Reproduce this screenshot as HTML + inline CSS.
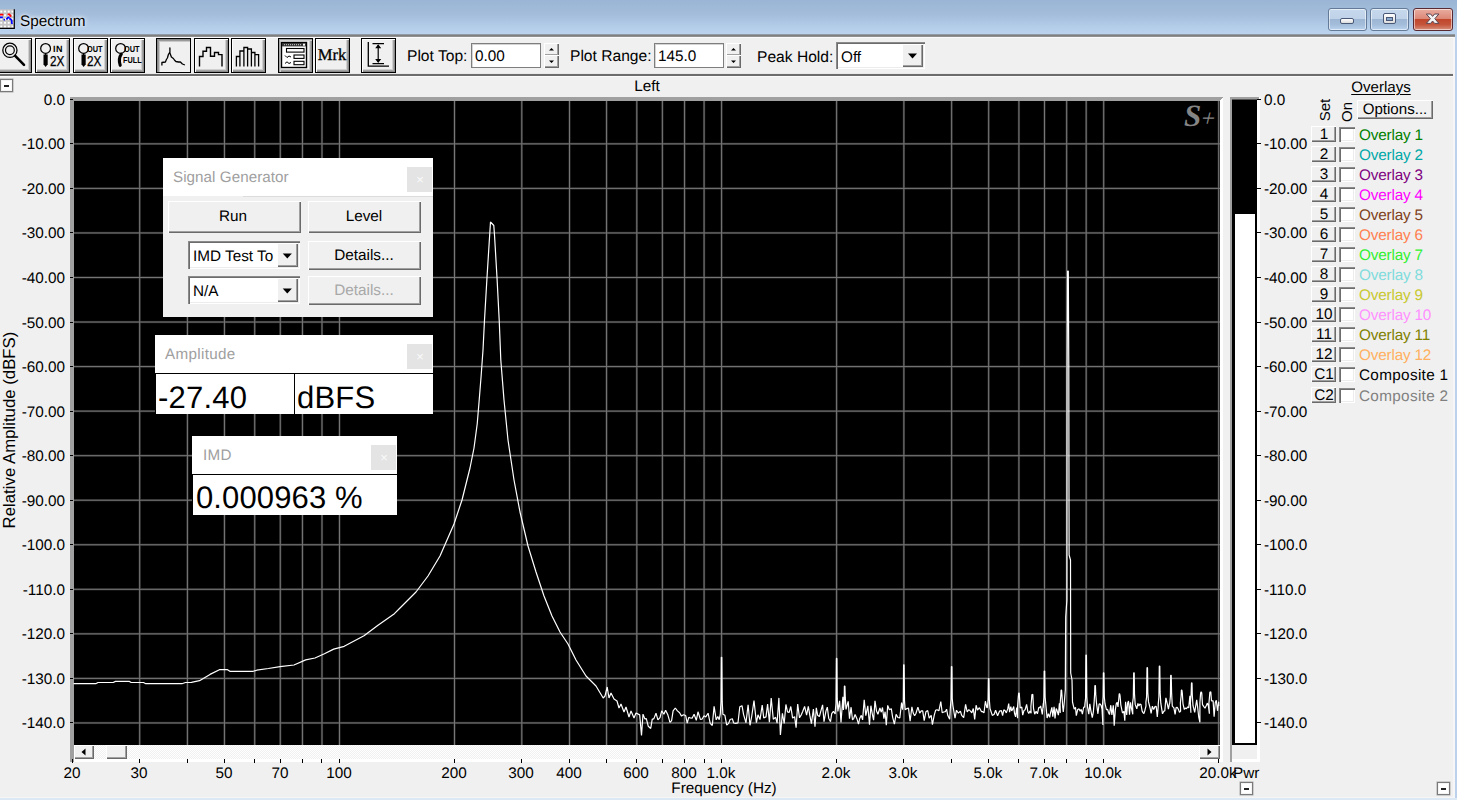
<!DOCTYPE html><html><head><meta charset="utf-8"><title>Spectrum</title><style>html,body{margin:0;padding:0;background:#f0f0f0;overflow:hidden;}#w{position:relative;width:1457px;height:800px;overflow:hidden;font-family:"Liberation Sans",sans-serif;font-size:15px;}#w div,#w span,#w svg{position:absolute;white-space:pre;}#w svg{overflow:visible;}</style></head><body><div id="w"><div style="left:0px;top:0px;width:1457px;height:35px;background:linear-gradient(#9ab5d5 0%,#a3bcda 40%,#b3cce8 75%,#bcd4ee 100%);"></div>
<svg style="left:0;top:9px" width="16" height="21" viewBox="0 0 16 21"><rect x="-1" y="0.3" width="15.3" height="19" fill="#c4c4c4"/><rect x="0.30" y="1.60" width="1.9" height="1.9" fill="#fff"/><rect x="0.30" y="5.35" width="1.9" height="1.9" fill="#fff"/><rect x="0.30" y="9.10" width="1.9" height="1.9" fill="#fff"/><rect x="0.30" y="12.85" width="1.9" height="1.9" fill="#fff"/><rect x="0.30" y="16.60" width="1.9" height="1.9" fill="#fff"/><rect x="4.05" y="1.60" width="1.9" height="1.9" fill="#fff"/><rect x="4.05" y="5.35" width="1.9" height="1.9" fill="#fff"/><rect x="4.05" y="9.10" width="1.9" height="1.9" fill="#fff"/><rect x="4.05" y="12.85" width="1.9" height="1.9" fill="#fff"/><rect x="4.05" y="16.60" width="1.9" height="1.9" fill="#fff"/><rect x="7.80" y="1.60" width="1.9" height="1.9" fill="#fff"/><rect x="7.80" y="5.35" width="1.9" height="1.9" fill="#fff"/><rect x="7.80" y="9.10" width="1.9" height="1.9" fill="#fff"/><rect x="7.80" y="12.85" width="1.9" height="1.9" fill="#fff"/><rect x="7.80" y="16.60" width="1.9" height="1.9" fill="#fff"/><rect x="11.55" y="1.60" width="1.9" height="1.9" fill="#fff"/><rect x="11.55" y="5.35" width="1.9" height="1.9" fill="#fff"/><rect x="11.55" y="9.10" width="1.9" height="1.9" fill="#fff"/><rect x="11.55" y="12.85" width="1.9" height="1.9" fill="#fff"/><rect x="11.55" y="16.60" width="1.9" height="1.9" fill="#fff"/><path d="M14.3 0.3 V19.3 H-1" fill="none" stroke="#000" stroke-width="1.2"/><path d="M0 5.6 H3.4 M7.6 5.4 L9.4 5.4 L11.2 7.6" stroke="#f00" stroke-width="1.7" fill="none"/><path d="M0 8.3 H2.8 M3.6 10.6 H5 M6.4 10.4 L8 8.6 L9.6 8.4 M9.5 9.5 L11.6 11.2 L12 15" stroke="#00f" stroke-width="1.7" fill="none"/></svg>
<span style="left:19.6px;transform-origin:0 100%;top:9.5px;line-height:21px;font-size:15.3px;color:#000;text-shadow:0 0 6px #fff,0 0 3px #fff;transform:rotate(.03deg);">Spectrum</span>
<div style="left:1328px;top:8px;width:39px;height:23px;box-sizing:border-box;border:1px solid #647a99;border-radius:3px;background:linear-gradient(#c6d8ec 0%,#bfd2e8 48%,#9db6d3 50%,#a3bdda 75%,#b9d3ef 100%);box-shadow:inset 0 0 0 1px rgba(255,255,255,.55);"></div>
<div style="left:1370px;top:8px;width:39px;height:23px;box-sizing:border-box;border:1px solid #647a99;border-radius:3px;background:linear-gradient(#c6d8ec 0%,#bfd2e8 48%,#9db6d3 50%,#a3bdda 75%,#b9d3ef 100%);box-shadow:inset 0 0 0 1px rgba(255,255,255,.55);"></div>
<div style="left:1413px;top:8px;width:40px;height:23px;box-sizing:border-box;border:1px solid #5a2a33;border-radius:3px;background:linear-gradient(#e9ada0 0%,#dc8675 48%,#c1462b 50%,#c4553c 75%,#d8917e 100%);box-shadow:inset 0 0 0 1px rgba(255,255,255,.55);"></div>
<div style="left:1340px;top:18px;width:14px;height:6px;box-sizing:border-box;border:1px solid #4a5878;border-radius:2px;background:linear-gradient(#fff,#dcdcdc);"></div>
<div style="left:1383px;top:13px;width:13px;height:11px;box-sizing:border-box;border:1px solid #4a5878;border-radius:2px;background:linear-gradient(#fff,#dcdcdc);"></div>
<div style="left:1386px;top:17px;width:7px;height:4px;box-sizing:border-box;border:1px solid #4a5878;background:#8aa9cc;"></div>
<svg style="left:1424px;top:12px" width="18" height="14" viewBox="0 0 18 14"><path d="M2.3 2 L6.6 2 L8.6 4.4 L10.6 2 L14.9 2 L10.8 6.7 L14.9 11.4 L10.6 11.4 L8.6 9 L6.6 11.4 L2.3 11.4 L6.4 6.7 Z" fill="#f4f4f4" stroke="#5b4550" stroke-width="1" stroke-linejoin="round"/></svg>
<div style="left:0px;top:35px;width:1455px;height:762px;background:#f0f0f0;"></div>
<div style="left:0px;top:34px;width:1455px;height:1px;background:#9099a4;"></div>
<div style="left:0px;top:35px;width:1455px;height:1px;background:#808080;"></div>
<div style="left:0px;top:36px;width:1455px;height:1px;background:#909090;"></div>
<div style="left:0px;top:37px;width:1455px;height:1px;background:#fbfbfb;"></div>
<div style="left:1453px;top:37px;width:2px;height:760px;background:#f6f6f6;"></div>
<div style="left:1455px;top:35px;width:2px;height:765px;background:#bcd2ec;"></div>
<div style="left:0px;top:797px;width:1455px;height:1px;background:#f6f6f6;"></div>
<div style="left:0px;top:798px;width:1457px;height:2px;background:#dde8f5;"></div>
<div style="left:0px;top:74px;width:1453px;height:2px;background:#6c6c6c;"></div>
<div style="left:0px;top:76px;width:1453px;height:1px;background:#fafafa;"></div>
<div style="left:0px;top:73px;width:1453px;height:1px;background:#e9e9e9;"></div>
<div style="left:-3px;top:38px;width:35px;height:35px;box-sizing:border-box;border:1px solid #000;background:#f0f0f0;box-shadow:inset 1px 1px 0 #fff,inset -1px -1px 0 #8c8c8c,inset -2px -2px 0 #a4a4a4,inset -3px -3px 0 #d0d0d0;"></div>
<div style="left:35px;top:38px;width:35px;height:35px;box-sizing:border-box;border:1px solid #000;background:#f0f0f0;box-shadow:inset 1px 1px 0 #fff,inset -1px -1px 0 #8c8c8c,inset -2px -2px 0 #a4a4a4,inset -3px -3px 0 #d0d0d0;"></div>
<div style="left:73px;top:38px;width:35px;height:35px;box-sizing:border-box;border:1px solid #000;background:#f0f0f0;box-shadow:inset 1px 1px 0 #fff,inset -1px -1px 0 #8c8c8c,inset -2px -2px 0 #a4a4a4,inset -3px -3px 0 #d0d0d0;"></div>
<div style="left:110px;top:38px;width:35px;height:35px;box-sizing:border-box;border:1px solid #000;background:#f0f0f0;box-shadow:inset 1px 1px 0 #fff,inset -1px -1px 0 #8c8c8c,inset -2px -2px 0 #a4a4a4,inset -3px -3px 0 #d0d0d0;"></div>
<div style="left:156px;top:38px;width:35px;height:35px;box-sizing:border-box;border:1px solid #000;background:#f0f0f0;box-shadow:inset 1px 1px 0 #8a8a8a,inset 2px 2px 0 #9a9a9a,inset 3px 3px 0 #c8c8c8;"></div>
<div style="left:194px;top:38px;width:35px;height:35px;box-sizing:border-box;border:1px solid #000;background:#f0f0f0;box-shadow:inset 1px 1px 0 #fff,inset -1px -1px 0 #8c8c8c,inset -2px -2px 0 #a4a4a4,inset -3px -3px 0 #d0d0d0;"></div>
<div style="left:231px;top:38px;width:35px;height:35px;box-sizing:border-box;border:1px solid #000;background:#f0f0f0;box-shadow:inset 1px 1px 0 #fff,inset -1px -1px 0 #8c8c8c,inset -2px -2px 0 #a4a4a4,inset -3px -3px 0 #d0d0d0;"></div>
<div style="left:278px;top:38px;width:35px;height:35px;box-sizing:border-box;border:1px solid #000;background:#f0f0f0;box-shadow:inset 1px 1px 0 #fff,inset -1px -1px 0 #8c8c8c,inset -2px -2px 0 #a4a4a4,inset -3px -3px 0 #d0d0d0;"></div>
<div style="left:315px;top:38px;width:35px;height:35px;box-sizing:border-box;border:1px solid #000;background:#f0f0f0;box-shadow:inset 1px 1px 0 #fff,inset -1px -1px 0 #8c8c8c,inset -2px -2px 0 #a4a4a4,inset -3px -3px 0 #d0d0d0;"></div>
<div style="left:361px;top:38px;width:35px;height:35px;box-sizing:border-box;border:1px solid #000;background:#f0f0f0;box-shadow:inset 1px 1px 0 #fff,inset -1px -1px 0 #8c8c8c,inset -2px -2px 0 #a4a4a4,inset -3px -3px 0 #d0d0d0;"></div>
<div style="left:279px;top:39px;width:33px;height:33px;box-shadow:inset 1px 1px 0 #a6a6a6,inset 2px 2px 0 #d2d2d2;"></div>
<svg style="left:0px;top:38px" width="35" height="35" viewBox="0 38 35 35" ><circle cx="9.9" cy="50.3" r="7.1" fill="none" stroke="#000" stroke-width="1.25"/><circle cx="9.9" cy="50.3" r="4.4" fill="none" stroke="#000" stroke-width="1.2"/><path d="M15.2 55.8 L24 64.8" stroke="#000" stroke-width="2.6" stroke-linecap="round"/></svg>
<svg style="left:35px;top:38px" width="35" height="35" viewBox="35 38 35 35" ><circle cx="45.6" cy="48.4" r="4.9" fill="none" stroke="#000" stroke-width="1.25"/><path d="M43.5 54.6 L47.7 54.6 L47.7 64.2 L45.6 67 L43.5 64.2 Z" fill="#000"/><path d="M45.6 53 V55" stroke="#000" stroke-width="1.4"/></svg>
<svg style="left:73px;top:38px" width="35" height="35" viewBox="73 38 35 35" ><circle cx="83.6" cy="48.4" r="4.9" fill="none" stroke="#000" stroke-width="1.25"/><path d="M81.5 54.6 L85.7 54.6 L85.7 64.2 L83.6 67 L81.5 64.2 Z" fill="#000"/><path d="M83.6 53 V55" stroke="#000" stroke-width="1.4"/></svg>
<svg style="left:110px;top:38px" width="35" height="35" viewBox="110 38 35 35" ><circle cx="120.6" cy="48.4" r="4.9" fill="none" stroke="#000" stroke-width="1.25"/><path d="M121.3 54.2 C119.3 57 118.8 61 120.2 65.3" fill="none" stroke="#000" stroke-width="3.1" stroke-linecap="round"/></svg>
<span style="left:53.3px;transform-origin:0 100%;top:42px;line-height:14px;font-size:9px;color:#000;font-weight:bold;letter-spacing:.5px;transform:rotate(.03deg);">IN</span>
<span style="left:49.6px;transform-origin:0 100%;top:51px;line-height:20px;font-size:14px;color:#000;display:inline-block;transform-origin:0 50%;transform:scaleX(.84);-webkit-text-stroke:.25px #000;">2X</span>
<span style="left:86.8px;transform-origin:0 100%;top:42px;line-height:14px;font-size:9px;color:#000;font-weight:bold;display:inline-block;transform-origin:0 50%;transform:scaleX(.82);">OUT</span>
<span style="left:87.2px;transform-origin:0 100%;top:51px;line-height:20px;font-size:14px;color:#000;display:inline-block;transform-origin:0 50%;transform:scaleX(.84);-webkit-text-stroke:.25px #000;">2X</span>
<span style="left:124px;transform-origin:0 100%;top:42px;line-height:14px;font-size:9px;color:#000;font-weight:bold;display:inline-block;transform-origin:0 50%;transform:scaleX(.82);">OUT</span>
<span style="left:123px;transform-origin:0 100%;top:53px;line-height:14px;font-size:8.5px;color:#000;font-weight:bold;display:inline-block;transform-origin:0 50%;transform:scaleX(.86);">FULL</span>
<svg style="left:156px;top:38px" width="35" height="35" viewBox="156 38 35 35" ><path transform="translate(-0.6 0)" d="M162.5 65.5 L162.5 62.5 L166 62 L167 59.5 L168 58 L169 54.5 L170.5 52 L170.5 48 L170.5 53 L172 57 L174 58.5 L175 60 L176.5 61.5 L179 62 L181 62 L183 64 L185.5 65" fill="none" stroke="#000" stroke-width="1.3" stroke-linejoin="round"/></svg>
<svg style="left:194px;top:38px" width="35" height="35" viewBox="194 38 35 35" ><path d="M199.5 66.5 V56.5 H203 V51.3 H206.5 V47.5 H210.5 V56.3 H214.5 V52.5 H218.5 V54.6 H222 V66.5" fill="none" stroke="#000" stroke-width="1.4"/></svg>
<svg style="left:231px;top:38px" width="35" height="35" viewBox="231 38 35 35" ><path transform="translate(-0.6 0)" d="M237 66.5 V56.5 H240.5 V51 H244.5 V47.5 H248.2 V49 H252 V52.5 H255.5 V54.7 H259.2 V66.5 M240.5 66.5 V56.5 M244.5 66.5 V51 M248.2 66.5 V49 M252 66.5 V52.5 M255.5 66.5 V54.7" fill="none" stroke="#000" stroke-width="1.3"/></svg>
<svg style="left:278px;top:38px" width="35" height="35" viewBox="278 38 35 35" ><rect x="281.5" y="42.5" width="25" height="25" fill="#fff" stroke="#000" stroke-width="1.4"/><rect x="282" y="43" width="24" height="3.4" fill="#333"/><path d="M284 44.7 H302" stroke="#ccc" stroke-width="1" stroke-dasharray="1 1"/><rect x="303" y="43.7" width="2" height="2" fill="#fff"/><rect x="286.5" y="48.5" width="17.5" height="3.6" fill="#fff" stroke="#000" stroke-width="1.1"/><rect x="294" y="55" width="10" height="3.4" fill="#fff" stroke="#000" stroke-width="1.1"/><rect x="294" y="61.3" width="10" height="3.4" fill="#fff" stroke="#000" stroke-width="1.1"/><path d="M285 55.5 L287 57.5 L289 56 L291 57 M285 63.5 L287 61.8 L289 63.5 L291 62.5" stroke="#000" stroke-width="1" fill="none"/></svg>
<span style="left:32.30000000000001px;width:600px;text-align:center;top:43px;line-height:23px;font-size:16.6px;color:#000;font-family:'Liberation Serif',serif;-webkit-text-stroke:.3px #000;transform:rotate(.03deg);">Mrk</span>
<svg style="left:361px;top:38px" width="35" height="35" viewBox="361 38 35 35" ><path d="M368.3 42 V66.2 H389" fill="none" stroke="#000" stroke-width="1.3"/><path d="M372.5 43.6 H384 M372.5 63.6 H384 M378.2 45 V62" stroke="#000" stroke-width="1.2" fill="none"/><path d="M378.2 44.2 L381.2 48.3 H375.2 Z M378.2 63 L381.2 58.9 H375.2 Z" fill="#000"/></svg>
<span style="left:407px;transform-origin:0 100%;top:45px;line-height:21px;font-size:15.6px;color:#000;transform:rotate(.03deg);">Plot Top:</span>
<div style="left:471px;top:43px;width:70px;height:25px;box-sizing:border-box;border:1px solid #7e7e7e;background:#fff;box-shadow:inset 1px 1px 0 #d4d4d4;"></div>
<span style="left:475px;transform-origin:0 100%;top:45px;line-height:21px;font-size:15.3px;color:#000;transform:rotate(.03deg);">0.00</span>
<div style="left:544px;top:43px;width:15px;height:13px;background:#f0f0f0;box-shadow:inset 1px 1px 0 #fff,inset -1px -1px 0 #6a6a6a,inset -2px -2px 0 #a0a0a0;"></div>
<div style="left:544px;top:55px;width:15px;height:13px;background:#f0f0f0;box-shadow:inset 1px 1px 0 #fff,inset -1px -1px 0 #6a6a6a,inset -2px -2px 0 #a0a0a0;"></div>
<svg style="left:544px;top:43px" width="15" height="25" viewBox="544 43 15 25" ><path d="M549 50.5 L551.5 48 L554 50.5 Z M549 60.5 L551.5 63 L554 60.5 Z" fill="#000"/></svg>
<span style="left:570px;transform-origin:0 100%;top:45px;line-height:21px;font-size:15.6px;color:#000;transform:rotate(.03deg);">Plot Range:</span>
<div style="left:654px;top:43px;width:70px;height:25px;box-sizing:border-box;border:1px solid #7e7e7e;background:#fff;box-shadow:inset 1px 1px 0 #d4d4d4;"></div>
<span style="left:658px;transform-origin:0 100%;top:45px;line-height:21px;font-size:15.3px;color:#000;transform:rotate(.03deg);">145.0</span>
<div style="left:726px;top:43px;width:15px;height:13px;background:#f0f0f0;box-shadow:inset 1px 1px 0 #fff,inset -1px -1px 0 #6a6a6a,inset -2px -2px 0 #a0a0a0;"></div>
<div style="left:726px;top:55px;width:15px;height:13px;background:#f0f0f0;box-shadow:inset 1px 1px 0 #fff,inset -1px -1px 0 #6a6a6a,inset -2px -2px 0 #a0a0a0;"></div>
<svg style="left:726px;top:43px" width="15" height="25" viewBox="726 43 15 25" ><path d="M731 50.5 L733.5 48 L736 50.5 Z M731 60.5 L733.5 63 L736 60.5 Z" fill="#000"/></svg>
<span style="left:757px;transform-origin:0 100%;top:46px;line-height:21px;font-size:15.6px;color:#000;transform:rotate(.03deg);">Peak Hold:</span>
<div style="left:836px;top:42px;width:89px;height:27px;background:#fff;box-shadow:inset 1px 1px 0 #8a8a8a,inset 2px 2px 0 #6c6c6c,inset -1px -1px 0 #fff,inset -2px -2px 0 #ececec;"></div>
<span style="left:841px;transform-origin:0 100%;top:46px;line-height:21px;font-size:15.3px;color:#000;transform:rotate(.03deg);">Off</span>
<div style="left:902px;top:44px;width:21px;height:23px;background:#f0f0f0;box-shadow:inset 1px 1px 0 #fff,inset -1px -1px 0 #6a6a6a,inset -2px -2px 0 #a0a0a0;"></div>
<svg style="left:902px;top:44px" width="21" height="23" viewBox="902 44 21 23" ><path d="M908 53.4 L917 53.4 L912.5 58.4 Z" fill="#000"/></svg>
<span style="left:347px;width:600px;text-align:center;top:75px;line-height:21px;font-size:15.3px;color:#000;transform:rotate(.03deg);">Left</span>
<div style="left:0px;top:79px;width:13px;height:13px;box-sizing:border-box;border:1px solid #7a7a7a;background:#fff;box-shadow:0 0 0 .5px #a8a8a8,inset 0 0 0 1px #f4f4f4;"></div>
<div style="left:3.7px;top:85.4px;width:5.4px;height:1.4px;background:#222;"></div>
<div style="left:1240px;top:782px;width:13px;height:13px;box-sizing:border-box;border:1px solid #7a7a7a;background:#fff;box-shadow:0 0 0 .5px #a8a8a8,inset 0 0 0 1px #f4f4f4;"></div>
<div style="left:1243.7px;top:788.4px;width:5.4px;height:1.4px;background:#222;"></div>
<div style="left:1437px;top:782px;width:13px;height:13px;box-sizing:border-box;border:1px solid #7a7a7a;background:#fff;box-shadow:0 0 0 .5px #a8a8a8,inset 0 0 0 1px #f4f4f4;"></div>
<div style="left:1440.7px;top:788.4px;width:5.4px;height:1.4px;background:#222;"></div>
<div style="left:70px;top:97px;width:1153px;height:665px;background:#fff;"></div>
<div style="left:70px;top:97px;width:4px;height:665px;background:#a0a0a0;"></div>
<div style="left:70px;top:97px;width:1150px;height:4px;background:#a0a0a0;"></div>
<div style="left:1220px;top:97px;width:3px;height:4px;background:linear-gradient(135deg,#a0a0a0 50%,#fff 50%);"></div>
<div style="left:70px;top:759px;width:4px;height:3px;background:#a0a0a0;"></div>
<div style="left:74px;top:101px;width:1146px;height:644px;background:#000;"></div>
<div style="left:74px;top:745px;width:1146px;height:14px;background:repeating-conic-gradient(#fff 0 25%,#f0f0f0 0 50%) 0 0/2px 2px;"></div>
<div style="left:74px;top:745px;width:20px;height:14px;background:#f0f0f0;box-shadow:inset 1px 1px 0 #fff,inset -1px -1px 0 #6a6a6a,inset -2px -2px 0 #a0a0a0;"></div>
<div style="left:1199px;top:745px;width:21px;height:14px;background:#f0f0f0;box-shadow:inset 1px 1px 0 #fff,inset -1px -1px 0 #6a6a6a,inset -2px -2px 0 #a0a0a0;"></div>
<div style="left:106px;top:745px;width:21px;height:14px;background:#f0f0f0;box-shadow:inset 1px 1px 0 #fff,inset -1px -1px 0 #6a6a6a,inset -2px -2px 0 #a0a0a0;"></div>
<svg style="left:74px;top:745px" width="20" height="14" viewBox="74 745 20 14" ><path d="M85.5 748.5 L85.5 755.5 L81.5 752 Z" fill="#000"/></svg>
<svg style="left:1199px;top:745px" width="21" height="14" viewBox="1199 745 21 14" ><path d="M1207.5 748.5 L1207.5 755.5 L1211.5 752 Z" fill="#000"/></svg>
<svg style="left:0;top:0" width="1457" height="800" viewBox="0 0 1457 800"><g><rect x="138.53" y="101" width="2.30" height="644" fill="#282828"/><rect x="186.27" y="101" width="2.30" height="644" fill="#282828"/><rect x="223.30" y="101" width="2.30" height="644" fill="#282828"/><rect x="253.56" y="101" width="2.30" height="644" fill="#282828"/><rect x="279.14" y="101" width="2.30" height="644" fill="#282828"/><rect x="301.30" y="101" width="2.30" height="644" fill="#282828"/><rect x="320.84" y="101" width="2.30" height="644" fill="#282828"/><rect x="338.33" y="101" width="2.30" height="644" fill="#282828"/><rect x="453.35" y="101" width="2.30" height="644" fill="#282828"/><rect x="520.63" y="101" width="2.30" height="644" fill="#282828"/><rect x="568.37" y="101" width="2.30" height="644" fill="#282828"/><rect x="605.40" y="101" width="2.30" height="644" fill="#282828"/><rect x="635.66" y="101" width="2.30" height="644" fill="#282828"/><rect x="661.24" y="101" width="2.30" height="644" fill="#282828"/><rect x="683.40" y="101" width="2.30" height="644" fill="#282828"/><rect x="702.94" y="101" width="2.30" height="644" fill="#282828"/><rect x="720.43" y="101" width="2.30" height="644" fill="#282828"/><rect x="835.45" y="101" width="2.30" height="644" fill="#282828"/><rect x="902.73" y="101" width="2.30" height="644" fill="#282828"/><rect x="950.47" y="101" width="2.30" height="644" fill="#282828"/><rect x="987.50" y="101" width="2.30" height="644" fill="#282828"/><rect x="1017.76" y="101" width="2.30" height="644" fill="#282828"/><rect x="1043.34" y="101" width="2.30" height="644" fill="#282828"/><rect x="1065.50" y="101" width="2.30" height="644" fill="#282828"/><rect x="1085.04" y="101" width="2.30" height="644" fill="#282828"/><rect x="1102.53" y="101" width="2.30" height="644" fill="#282828"/><rect x="1217.55" y="101" width="2.30" height="644" fill="#282828"/><rect x="74" y="142.70" width="1146" height="2.3" fill="#282828"/><rect x="74" y="187.24" width="1146" height="2.3" fill="#282828"/><rect x="74" y="231.79" width="1146" height="2.3" fill="#282828"/><rect x="74" y="276.33" width="1146" height="2.3" fill="#282828"/><rect x="74" y="320.88" width="1146" height="2.3" fill="#282828"/><rect x="74" y="365.43" width="1146" height="2.3" fill="#282828"/><rect x="74" y="409.97" width="1146" height="2.3" fill="#282828"/><rect x="74" y="454.52" width="1146" height="2.3" fill="#282828"/><rect x="74" y="499.06" width="1146" height="2.3" fill="#282828"/><rect x="74" y="543.61" width="1146" height="2.3" fill="#282828"/><rect x="74" y="588.16" width="1146" height="2.3" fill="#282828"/><rect x="74" y="632.70" width="1146" height="2.3" fill="#282828"/><rect x="74" y="677.25" width="1146" height="2.3" fill="#282828"/><rect x="74" y="721.79" width="1146" height="2.3" fill="#282828"/><rect x="139.18" y="101" width="1.00" height="644" fill="#777777"/><rect x="186.92" y="101" width="1.00" height="644" fill="#777777"/><rect x="223.95" y="101" width="1.00" height="644" fill="#777777"/><rect x="254.21" y="101" width="1.00" height="644" fill="#777777"/><rect x="279.79" y="101" width="1.00" height="644" fill="#777777"/><rect x="301.95" y="101" width="1.00" height="644" fill="#777777"/><rect x="321.49" y="101" width="1.00" height="644" fill="#777777"/><rect x="338.98" y="101" width="1.00" height="644" fill="#777777"/><rect x="454.00" y="101" width="1.00" height="644" fill="#777777"/><rect x="521.28" y="101" width="1.00" height="644" fill="#777777"/><rect x="569.02" y="101" width="1.00" height="644" fill="#777777"/><rect x="606.05" y="101" width="1.00" height="644" fill="#777777"/><rect x="636.31" y="101" width="1.00" height="644" fill="#777777"/><rect x="661.89" y="101" width="1.00" height="644" fill="#777777"/><rect x="684.05" y="101" width="1.00" height="644" fill="#777777"/><rect x="703.59" y="101" width="1.00" height="644" fill="#777777"/><rect x="721.08" y="101" width="1.00" height="644" fill="#777777"/><rect x="836.10" y="101" width="1.00" height="644" fill="#777777"/><rect x="903.38" y="101" width="1.00" height="644" fill="#777777"/><rect x="951.12" y="101" width="1.00" height="644" fill="#777777"/><rect x="988.15" y="101" width="1.00" height="644" fill="#777777"/><rect x="1018.41" y="101" width="1.00" height="644" fill="#777777"/><rect x="1043.99" y="101" width="1.00" height="644" fill="#777777"/><rect x="1066.15" y="101" width="1.00" height="644" fill="#777777"/><rect x="1085.69" y="101" width="1.00" height="644" fill="#777777"/><rect x="1103.18" y="101" width="1.00" height="644" fill="#777777"/><rect x="1218.20" y="101" width="1.00" height="644" fill="#777777"/><rect x="74" y="143.35" width="1146" height="1.0" fill="#777777"/><rect x="74" y="187.89" width="1146" height="1.0" fill="#777777"/><rect x="74" y="232.44" width="1146" height="1.0" fill="#777777"/><rect x="74" y="276.98" width="1146" height="1.0" fill="#777777"/><rect x="74" y="321.53" width="1146" height="1.0" fill="#777777"/><rect x="74" y="366.08" width="1146" height="1.0" fill="#777777"/><rect x="74" y="410.62" width="1146" height="1.0" fill="#777777"/><rect x="74" y="455.17" width="1146" height="1.0" fill="#777777"/><rect x="74" y="499.71" width="1146" height="1.0" fill="#777777"/><rect x="74" y="544.26" width="1146" height="1.0" fill="#777777"/><rect x="74" y="588.81" width="1146" height="1.0" fill="#777777"/><rect x="74" y="633.35" width="1146" height="1.0" fill="#777777"/><rect x="74" y="677.90" width="1146" height="1.0" fill="#777777"/><rect x="74" y="722.44" width="1146" height="1.0" fill="#777777"/></g><path d="M73.5 683.7 L95.7 683.7 L98.0 682.5 L113.2 682.5 L115.5 681.4 L129.5 681.4 L131.1 682.5 L143.5 682.5 L145.8 683.7 L182.0 683.7 L185.5 682.5 L191.4 682.3 L199.5 680.7 L210.0 674.4 L219.4 669.7 L227.5 669.7 L229.9 671.3 L253.2 671.3 L256.7 670.2 L268.4 668.5 L280.0 666.7 L294.0 665.0 L305.7 659.9 L315.0 658.0 L324.4 653.8 L333.7 649.1 L344.2 646.3 L364.0 635.8 L378.0 625.3 L394.4 613.7 L400.0 608.0 L416.0 592.0 L428.0 576.0 L440.0 556.0 L454.0 524.0 L462.0 500.0 L470.0 468.0 L474.0 448.0 L477.2 424.0 L479.2 400.0 L481.2 375.0 L483.0 350.0 L484.5 320.0 L487.0 277.5 L489.2 242.5 L490.5 222.0 L493.8 225.5 L494.5 235.0 L497.0 277.5 L499.2 320.0 L500.8 360.0 L504.0 400.0 L508.0 440.0 L514.0 480.0 L520.0 512.0 L528.0 546.0 L536.0 572.0 L544.0 596.0 L552.0 616.0 L560.0 632.0 L568.0 644.0 L576.0 660.0 L586.0 676.0 L596.0 686.0 L603.2 698.0 L605.0 696.0 L607.2 687.0 L609.0 698.0 L611.0 693.0 L614.0 699.0 L617.0 701.0 L619.0 708.0 L621.0 704.0 L624.0 712.0 L626.0 707.0 L629.0 717.0 L631.0 711.0 L634.0 718.0 L636.0 713.0 L639.7 714.9 L641.5 735.5 L643.0 714.1 L644.8 718.9 L646.3 718.7 L648.3 726.3 L650.7 728.5 L652.2 719.4 L653.9 718.6 L656.0 713.2 L657.9 719.9 L660.0 717.6 L661.7 710.8 L663.9 714.3 L665.6 710.2 L667.7 714.4 L670.0 722.4 L671.6 720.7 L673.1 710.8 L675.3 708.0 L677.4 710.9 L679.6 712.8 L681.5 716.1 L683.5 714.8 L685.7 715.5 L687.2 723.1 L688.8 717.3 L690.3 718.0 L692.1 718.2 L694.1 714.3 L696.3 720.3 L698.0 711.8 L700.4 719.4 L702.0 719.2 L704.0 715.8 L705.8 716.9 L708.1 713.2 L710.2 723.4 L712.3 725.5 L714.1 706.3 L716.2 719.8 L717.8 716.4 L719.2 719.7 L720.3 713.8 L721.0 701.6 L721.3 657.3 L721.8 657.3 L722.2 701.9 L722.9 714.2 L724.9 715.3 L726.7 725.1 L728.6 723.4 L730.1 719.5 L732.3 718.8 L733.7 723.0 L735.7 723.4 L738.0 722.8 L739.8 706.8 L742.0 705.7 L743.6 714.7 L746.0 722.8 L748.1 704.8 L750.0 725.3 L751.7 716.5 L754.0 700.5 L756.4 722.6 L758.0 714.8 L760.0 719.6 L762.2 705.0 L763.7 717.9 L766.0 716.9 L767.6 704.0 L769.4 722.2 L771.2 698.0 L773.3 719.3 L775.6 717.3 L777.1 723.1 L778.9 697.9 L780.4 735.0 L782.4 713.3 L784.2 723.5 L785.9 704.5 L787.5 711.9 L789.1 712.5 L790.8 706.5 L792.6 718.1 L794.6 716.7 L796.1 727.6 L797.7 704.1 L799.5 717.8 L801.4 714.6 L802.8 711.3 L804.6 706.4 L806.6 715.1 L808.3 706.3 L809.8 715.2 L811.4 723.7 L813.4 709.1 L815.0 726.8 L816.3 707.9 L817.6 715.2 L819.4 716.5 L820.7 711.7 L822.6 704.9 L824.0 721.7 L826.0 710.9 L827.3 707.2 L828.7 718.2 L830.5 721.6 L831.7 713.7 L833.4 711.4 L835.2 714.0 L835.3 710.7 L836.0 703.6 L836.4 658.4 L836.9 658.4 L837.2 698.9 L837.9 711.4 L839.6 700.9 L841.0 722.4 L842.9 696.8 L843.4 709.9 L844.1 703.2 L844.4 686.0 L844.9 686.0 L845.3 697.9 L846.0 709.4 L848.2 701.3 L849.5 718.7 L851.1 707.2 L852.5 720.0 L853.8 718.3 L855.1 714.4 L856.9 718.7 L858.5 724.2 L859.7 718.5 L861.3 715.3 L862.6 719.9 L864.2 699.7 L865.8 715.6 L867.8 705.9 L869.5 724.6 L870.9 705.7 L872.3 714.0 L873.6 720.2 L875.0 700.8 L876.5 711.1 L877.9 714.2 L879.9 708.0 L881.3 712.2 L882.5 707.5 L883.9 718.7 L885.1 711.7 L886.3 725.3 L887.7 705.4 L889.4 709.7 L891.3 708.7 L892.6 717.1 L894.4 724.1 L896.1 714.3 L897.9 717.5 L899.8 718.0 L901.6 702.6 L902.6 709.6 L903.3 702.3 L903.6 664.8 L904.1 664.8 L904.5 700.8 L905.2 709.7 L906.9 708.6 L908.5 708.1 L910.1 721.3 L911.9 706.8 L913.2 713.0 L914.6 715.7 L915.9 713.5 L917.9 707.1 L919.7 713.1 L921.3 710.8 L922.7 710.8 L924.2 720.7 L925.9 711.8 L927.7 710.5 L929.2 718.1 L931.2 715.4 L932.4 724.6 L934.2 715.4 L935.6 710.3 L937.0 709.7 L938.9 710.8 L940.8 701.5 L942.2 712.7 L943.8 712.0 L945.3 711.7 L946.6 709.2 L947.8 715.6 L949.7 719.3 L950.3 708.4 L951.0 699.7 L951.4 666.5 L951.9 666.5 L952.2 698.6 L952.9 705.6 L955.0 718.2 L956.5 710.2 L958.4 713.2 L960.4 711.2 L961.7 715.4 L963.7 717.6 L965.6 704.3 L967.2 712.0 L968.8 709.6 L970.5 711.1 L971.8 712.8 L973.3 708.5 L974.7 719.4 L976.1 705.2 L977.5 710.2 L979.4 707.7 L981.4 711.6 L982.7 711.7 L984.0 712.9 L985.4 701.2 L986.9 707.9 L987.4 707.4 L988.1 699.2 L988.4 678.5 L988.9 678.5 L989.3 699.6 L990.0 708.5 L992.3 715.4 L994.2 714.3 L995.6 710.3 L997.6 715.8 L999.5 711.2 L1001.4 710.7 L1002.6 715.6 L1003.8 709.8 L1005.2 710.7 L1006.3 712.9 L1007.7 708.9 L1008.7 703.6 L1009.6 712.2 L1010.8 706.6 L1011.7 710.9 L1012.5 709.4 L1013.7 706.6 L1014.5 713.3 L1015.6 716.9 L1016.7 707.5 L1017.6 718.3 L1017.6 706.3 L1018.3 696.9 L1018.7 693.0 L1019.2 693.0 L1019.5 697.2 L1020.2 708.0 L1021.8 707.1 L1022.7 715.1 L1024.0 710.4 L1025.2 709.7 L1026.6 704.3 L1027.8 711.4 L1028.8 713.4 L1029.9 711.0 L1031.1 713.2 L1030.9 706.5 L1031.6 699.0 L1031.9 694.5 L1032.4 694.5 L1032.8 694.2 L1033.5 708.3 L1034.7 714.2 L1036.1 711.2 L1037.4 713.8 L1038.8 707.5 L1039.6 707.8 L1040.6 706.0 L1041.4 709.6 L1042.3 714.5 L1043.3 703.4 L1043.2 707.6 L1043.9 697.4 L1044.2 671.0 L1044.7 671.0 L1045.1 697.0 L1045.8 704.2 L1047.1 718.0 L1048.4 713.6 L1049.7 717.4 L1050.5 713.0 L1051.9 707.3 L1052.8 716.7 L1054.1 706.8 L1055.0 718.4 L1056.2 708.5 L1057.0 710.3 L1058.4 715.1 L1059.4 703.4 L1060.3 712.9 L1060.1 704.2 L1060.8 695.6 L1061.1 690.0 L1061.6 690.0 L1062.0 695.5 L1062.7 706.9 L1063.3 712.0 L1064.5 700.0 L1065.3 690.0 L1065.7 617.0 L1066.9 600.0 L1067.1 368.0 L1067.6 271.0 L1068.3 271.0 L1068.8 368.0 L1069.1 555.0 L1070.5 560.0 L1070.7 673.0 L1072.0 680.0 L1072.5 702.0 L1074.2 709.1 L1075.5 707.3 L1076.3 715.7 L1077.7 709.5 L1079.1 708.9 L1080.2 711.3 L1081.2 709.3 L1082.4 714.2 L1083.7 707.0 L1084.7 707.2 L1084.9 704.1 L1085.6 698.0 L1085.9 655.0 L1086.4 655.0 L1086.8 696.8 L1087.5 706.8 L1088.8 714.2 L1089.8 703.8 L1090.9 710.8 L1092.3 717.7 L1093.4 711.6 L1094.3 699.8 L1093.9 706.1 L1094.6 694.0 L1094.9 685.5 L1095.4 685.5 L1095.8 694.9 L1096.5 703.2 L1097.9 713.8 L1099.1 704.0 L1100.0 703.8 L1101.1 705.5 L1102.0 709.0 L1102.9 725.0 L1102.4 706.0 L1103.1 697.1 L1103.4 672.8 L1103.9 672.8 L1104.3 696.7 L1105.0 703.7 L1106.5 709.8 L1107.6 709.3 L1108.5 712.5 L1109.5 714.6 L1110.8 705.2 L1111.9 715.0 L1113.3 705.4 L1114.2 725.7 L1115.3 710.2 L1116.3 703.6 L1117.2 702.4 L1118.0 707.0 L1118.2 704.4 L1118.9 697.7 L1119.2 693.8 L1119.7 693.8 L1120.1 696.0 L1120.8 704.8 L1122.5 713.0 L1123.9 711.3 L1124.8 720.6 L1125.6 701.7 L1126.7 715.0 L1127.6 703.3 L1128.5 701.0 L1129.5 714.8 L1130.5 702.3 L1131.5 708.5 L1132.8 714.3 L1132.6 702.8 L1133.3 697.5 L1133.7 672.8 L1134.2 672.8 L1134.5 694.1 L1135.2 704.4 L1136.8 708.8 L1137.9 703.4 L1138.9 706.1 L1139.8 704.0 L1141.0 704.6 L1142.1 710.9 L1143.0 712.6 L1143.9 713.7 L1144.7 711.0 L1146.0 705.8 L1145.9 702.1 L1146.6 697.2 L1147.0 667.7 L1147.5 667.7 L1147.8 692.6 L1148.5 701.9 L1150.1 708.0 L1151.1 713.5 L1152.4 706.2 L1153.7 709.6 L1154.9 706.7 L1156.2 706.4 L1157.3 716.9 L1158.3 705.8 L1158.2 704.9 L1158.9 696.8 L1159.3 666.0 L1159.8 666.0 L1160.1 691.9 L1160.8 703.2 L1162.5 713.8 L1163.8 711.2 L1164.8 711.0 L1165.9 697.9 L1167.3 703.9 L1168.4 709.2 L1169.5 703.4 L1169.7 703.6 L1170.4 696.5 L1170.7 675.3 L1171.2 675.3 L1171.6 692.7 L1172.3 706.2 L1173.9 707.8 L1175.1 714.4 L1176.1 707.6 L1177.2 707.3 L1178.4 709.4 L1179.5 712.3 L1180.6 711.2 L1180.4 702.9 L1181.1 696.2 L1181.4 690.0 L1181.9 690.0 L1182.3 693.1 L1183.0 703.8 L1184.3 709.5 L1185.2 708.1 L1186.5 708.8 L1187.6 706.8 L1188.7 707.9 L1189.9 695.9 L1190.9 712.8 L1190.4 702.9 L1191.1 695.0 L1191.5 682.9 L1192.0 682.9 L1192.3 694.8 L1193.0 705.7 L1194.7 712.4 L1195.6 706.6 L1196.7 699.8 L1197.7 707.7 L1198.7 716.8 L1199.9 722.3 L1199.9 703.0 L1200.6 693.1 L1201.0 692.0 L1201.5 692.0 L1201.8 693.6 L1202.5 704.7 L1203.8 706.7 L1205.0 708.2 L1206.3 705.6 L1207.4 703.1 L1208.5 706.6 L1209.4 713.8 L1208.9 703.6 L1209.6 695.5 L1209.9 692.0 L1210.4 692.0 L1210.8 691.9 L1211.5 700.9 L1213.1 700.8 L1214.1 716.6 L1215.3 702.5 L1216.3 700.2 L1217.5 710.8 L1218.7 701.7 L1218.8 706.0" fill="none" stroke="#fff" stroke-width="1.2" stroke-linejoin="bevel"/></svg>
<span style="left:1184px;transform-origin:0 100%;top:96px;line-height:39px;font-size:31px;color:#858585;font-family:'Liberation Serif',serif;font-weight:bold;font-style:italic;transform:rotate(.03deg);">S</span>
<span style="left:1197.8px;transform-origin:0 100%;top:103px;line-height:30px;font-size:24px;color:#858585;font-family:'Liberation Serif',serif;transform:skewX(-14deg);">+</span>
<div style="left:70px;top:99px;width:3px;height:1px;background:#000;"></div>
<span style="left:-534.7px;width:600px;text-align:right;transform-origin:100% 100%;top:89px;line-height:21px;font-size:15.3px;color:#000;transform:rotate(.03deg);">0.0</span>
<span style="left:1264.3px;transform-origin:0 100%;top:89px;line-height:21px;font-size:15.3px;color:#000;transform:rotate(.03deg);">0.0</span>
<div style="left:70px;top:143px;width:3px;height:1px;background:#000;"></div>
<span style="left:-534.7px;width:600px;text-align:right;transform-origin:100% 100%;top:133px;line-height:21px;font-size:15.3px;color:#000;transform:rotate(.03deg);">-10.00</span>
<span style="left:1264.3px;transform-origin:0 100%;top:133px;line-height:21px;font-size:15.3px;color:#000;transform:rotate(.03deg);">-10.00</span>
<div style="left:70px;top:188px;width:3px;height:1px;background:#000;"></div>
<span style="left:-534.7px;width:600px;text-align:right;transform-origin:100% 100%;top:178px;line-height:21px;font-size:15.3px;color:#000;transform:rotate(.03deg);">-20.00</span>
<span style="left:1264.3px;transform-origin:0 100%;top:178px;line-height:21px;font-size:15.3px;color:#000;transform:rotate(.03deg);">-20.00</span>
<div style="left:70px;top:232px;width:3px;height:1px;background:#000;"></div>
<span style="left:-534.7px;width:600px;text-align:right;transform-origin:100% 100%;top:222px;line-height:21px;font-size:15.3px;color:#000;transform:rotate(.03deg);">-30.00</span>
<span style="left:1264.3px;transform-origin:0 100%;top:222px;line-height:21px;font-size:15.3px;color:#000;transform:rotate(.03deg);">-30.00</span>
<div style="left:70px;top:277px;width:3px;height:1px;background:#000;"></div>
<span style="left:-534.7px;width:600px;text-align:right;transform-origin:100% 100%;top:267px;line-height:21px;font-size:15.3px;color:#000;transform:rotate(.03deg);">-40.00</span>
<span style="left:1264.3px;transform-origin:0 100%;top:267px;line-height:21px;font-size:15.3px;color:#000;transform:rotate(.03deg);">-40.00</span>
<div style="left:70px;top:322px;width:3px;height:1px;background:#000;"></div>
<span style="left:-534.7px;width:600px;text-align:right;transform-origin:100% 100%;top:312px;line-height:21px;font-size:15.3px;color:#000;transform:rotate(.03deg);">-50.00</span>
<span style="left:1264.3px;transform-origin:0 100%;top:312px;line-height:21px;font-size:15.3px;color:#000;transform:rotate(.03deg);">-50.00</span>
<div style="left:70px;top:366px;width:3px;height:1px;background:#000;"></div>
<span style="left:-534.7px;width:600px;text-align:right;transform-origin:100% 100%;top:356px;line-height:21px;font-size:15.3px;color:#000;transform:rotate(.03deg);">-60.00</span>
<span style="left:1264.3px;transform-origin:0 100%;top:356px;line-height:21px;font-size:15.3px;color:#000;transform:rotate(.03deg);">-60.00</span>
<div style="left:70px;top:411px;width:3px;height:1px;background:#000;"></div>
<span style="left:-534.7px;width:600px;text-align:right;transform-origin:100% 100%;top:401px;line-height:21px;font-size:15.3px;color:#000;transform:rotate(.03deg);">-70.00</span>
<span style="left:1264.3px;transform-origin:0 100%;top:401px;line-height:21px;font-size:15.3px;color:#000;transform:rotate(.03deg);">-70.00</span>
<div style="left:70px;top:455px;width:3px;height:1px;background:#000;"></div>
<span style="left:-534.7px;width:600px;text-align:right;transform-origin:100% 100%;top:445px;line-height:21px;font-size:15.3px;color:#000;transform:rotate(.03deg);">-80.00</span>
<span style="left:1264.3px;transform-origin:0 100%;top:445px;line-height:21px;font-size:15.3px;color:#000;transform:rotate(.03deg);">-80.00</span>
<div style="left:70px;top:500px;width:3px;height:1px;background:#000;"></div>
<span style="left:-534.7px;width:600px;text-align:right;transform-origin:100% 100%;top:490px;line-height:21px;font-size:15.3px;color:#000;transform:rotate(.03deg);">-90.00</span>
<span style="left:1264.3px;transform-origin:0 100%;top:490px;line-height:21px;font-size:15.3px;color:#000;transform:rotate(.03deg);">-90.00</span>
<div style="left:70px;top:544px;width:3px;height:1px;background:#000;"></div>
<span style="left:-534.7px;width:600px;text-align:right;transform-origin:100% 100%;top:534px;line-height:21px;font-size:15.3px;color:#000;transform:rotate(.03deg);">-100.0</span>
<span style="left:1264.3px;transform-origin:0 100%;top:534px;line-height:21px;font-size:15.3px;color:#000;transform:rotate(.03deg);">-100.0</span>
<div style="left:70px;top:589px;width:3px;height:1px;background:#000;"></div>
<span style="left:-534.7px;width:600px;text-align:right;transform-origin:100% 100%;top:579px;line-height:21px;font-size:15.3px;color:#000;transform:rotate(.03deg);">-110.0</span>
<span style="left:1264.3px;transform-origin:0 100%;top:579px;line-height:21px;font-size:15.3px;color:#000;transform:rotate(.03deg);">-110.0</span>
<div style="left:70px;top:633px;width:3px;height:1px;background:#000;"></div>
<span style="left:-534.7px;width:600px;text-align:right;transform-origin:100% 100%;top:623px;line-height:21px;font-size:15.3px;color:#000;transform:rotate(.03deg);">-120.0</span>
<span style="left:1264.3px;transform-origin:0 100%;top:623px;line-height:21px;font-size:15.3px;color:#000;transform:rotate(.03deg);">-120.0</span>
<div style="left:70px;top:678px;width:3px;height:1px;background:#000;"></div>
<span style="left:-534.7px;width:600px;text-align:right;transform-origin:100% 100%;top:668px;line-height:21px;font-size:15.3px;color:#000;transform:rotate(.03deg);">-130.0</span>
<span style="left:1264.3px;transform-origin:0 100%;top:668px;line-height:21px;font-size:15.3px;color:#000;transform:rotate(.03deg);">-130.0</span>
<div style="left:70px;top:722px;width:3px;height:1px;background:#000;"></div>
<span style="left:-534.7px;width:600px;text-align:right;transform-origin:100% 100%;top:712px;line-height:21px;font-size:15.3px;color:#000;transform:rotate(.03deg);">-140.0</span>
<span style="left:1264.3px;transform-origin:0 100%;top:712px;line-height:21px;font-size:15.3px;color:#000;transform:rotate(.03deg);">-140.0</span>
<div style="left:72px;top:759px;width:1px;height:4px;background:#000;"></div>
<span style="left:-227.7px;width:600px;text-align:center;top:762px;line-height:21px;font-size:15.3px;color:#000;transform:rotate(.03deg);">20</span>
<div style="left:139px;top:759px;width:1px;height:4px;background:#000;"></div>
<span style="left:-160.7px;width:600px;text-align:center;top:762px;line-height:21px;font-size:15.3px;color:#000;transform:rotate(.03deg);">30</span>
<div style="left:187px;top:759px;width:1px;height:4px;background:#000;"></div>
<div style="left:224px;top:759px;width:1px;height:4px;background:#000;"></div>
<span style="left:-75.69999999999999px;width:600px;text-align:center;top:762px;line-height:21px;font-size:15.3px;color:#000;transform:rotate(.03deg);">50</span>
<div style="left:254px;top:759px;width:1px;height:4px;background:#000;"></div>
<div style="left:280px;top:759px;width:1px;height:4px;background:#000;"></div>
<span style="left:-19.69999999999999px;width:600px;text-align:center;top:762px;line-height:21px;font-size:15.3px;color:#000;transform:rotate(.03deg);">70</span>
<div style="left:302px;top:759px;width:1px;height:4px;background:#000;"></div>
<div style="left:321px;top:759px;width:1px;height:4px;background:#000;"></div>
<div style="left:339px;top:759px;width:1px;height:4px;background:#000;"></div>
<span style="left:39.30000000000001px;width:600px;text-align:center;top:762px;line-height:21px;font-size:15.3px;color:#000;transform:rotate(.03deg);">100</span>
<div style="left:454px;top:759px;width:1px;height:4px;background:#000;"></div>
<span style="left:154.3px;width:600px;text-align:center;top:762px;line-height:21px;font-size:15.3px;color:#000;transform:rotate(.03deg);">200</span>
<div style="left:521px;top:759px;width:1px;height:4px;background:#000;"></div>
<span style="left:221.29999999999995px;width:600px;text-align:center;top:762px;line-height:21px;font-size:15.3px;color:#000;transform:rotate(.03deg);">300</span>
<div style="left:569px;top:759px;width:1px;height:4px;background:#000;"></div>
<span style="left:269.29999999999995px;width:600px;text-align:center;top:762px;line-height:21px;font-size:15.3px;color:#000;transform:rotate(.03deg);">400</span>
<div style="left:606px;top:759px;width:1px;height:4px;background:#000;"></div>
<div style="left:636px;top:759px;width:1px;height:4px;background:#000;"></div>
<span style="left:336.29999999999995px;width:600px;text-align:center;top:762px;line-height:21px;font-size:15.3px;color:#000;transform:rotate(.03deg);">600</span>
<div style="left:662px;top:759px;width:1px;height:4px;background:#000;"></div>
<div style="left:684px;top:759px;width:1px;height:4px;background:#000;"></div>
<span style="left:384.29999999999995px;width:600px;text-align:center;top:762px;line-height:21px;font-size:15.3px;color:#000;transform:rotate(.03deg);">800</span>
<div style="left:704px;top:759px;width:1px;height:4px;background:#000;"></div>
<div style="left:721px;top:759px;width:1px;height:4px;background:#000;"></div>
<span style="left:421.29999999999995px;width:600px;text-align:center;top:762px;line-height:21px;font-size:15.3px;color:#000;transform:rotate(.03deg);">1.0k</span>
<div style="left:836px;top:759px;width:1px;height:4px;background:#000;"></div>
<span style="left:536.3px;width:600px;text-align:center;top:762px;line-height:21px;font-size:15.3px;color:#000;transform:rotate(.03deg);">2.0k</span>
<div style="left:903px;top:759px;width:1px;height:4px;background:#000;"></div>
<span style="left:603.3px;width:600px;text-align:center;top:762px;line-height:21px;font-size:15.3px;color:#000;transform:rotate(.03deg);">3.0k</span>
<div style="left:951px;top:759px;width:1px;height:4px;background:#000;"></div>
<div style="left:988px;top:759px;width:1px;height:4px;background:#000;"></div>
<span style="left:688.3px;width:600px;text-align:center;top:762px;line-height:21px;font-size:15.3px;color:#000;transform:rotate(.03deg);">5.0k</span>
<div style="left:1018px;top:759px;width:1px;height:4px;background:#000;"></div>
<div style="left:1044px;top:759px;width:1px;height:4px;background:#000;"></div>
<span style="left:744.3px;width:600px;text-align:center;top:762px;line-height:21px;font-size:15.3px;color:#000;transform:rotate(.03deg);">7.0k</span>
<div style="left:1066px;top:759px;width:1px;height:4px;background:#000;"></div>
<div style="left:1086px;top:759px;width:1px;height:4px;background:#000;"></div>
<div style="left:1103px;top:759px;width:1px;height:4px;background:#000;"></div>
<span style="left:803.3px;width:600px;text-align:center;top:762px;line-height:21px;font-size:15.3px;color:#000;transform:rotate(.03deg);">10.0k</span>
<div style="left:1218px;top:759px;width:1px;height:4px;background:#000;"></div>
<span style="left:918.3px;width:600px;text-align:center;top:762px;line-height:21px;font-size:15.3px;color:#000;transform:rotate(.03deg);">20.0k</span>
<span style="left:423.79999999999995px;width:600px;text-align:center;top:777px;line-height:21px;font-size:15.3px;color:#000;transform:rotate(.03deg);">Frequency (Hz)</span>
<span style="left:10.2px;top:429.8px;width:0;height:0;"><span style="left:-150px;top:-12px;width:300px;line-height:24px;text-align:center;font-size:16.8px;transform:rotate(-90deg);transform-origin:150px 12px;white-space:pre;">Relative Amplitude (dBFS)</span></span>
<div style="left:1230px;top:97px;width:30px;height:665px;background:#fff;"></div>
<div style="left:1230px;top:97px;width:2px;height:665px;background:#a0a0a0;"></div>
<div style="left:1230px;top:97px;width:27px;height:3px;background:#a0a0a0;"></div>
<div style="left:1257px;top:97px;width:3px;height:3px;background:linear-gradient(135deg,#a0a0a0 50%,#fff 50%);"></div>
<div style="left:1232px;top:100px;width:25px;height:645px;background:#000;"></div>
<div style="left:1232px;top:99px;width:25px;height:1px;background:#555;"></div>
<div style="left:1235px;top:214px;width:20px;height:529px;background:#fff;"></div>
<div style="left:1232px;top:745px;width:25px;height:14px;background:#f0f0f0;"></div>
<span style="left:1233.3px;transform-origin:0 100%;top:762px;line-height:21px;font-size:15.3px;color:#000;transform:rotate(.03deg);">Pwr</span>
<div style="left:1257px;top:99px;width:4px;height:1px;background:#000;"></div>
<div style="left:1257px;top:143px;width:4px;height:1px;background:#000;"></div>
<div style="left:1257px;top:188px;width:4px;height:1px;background:#000;"></div>
<div style="left:1257px;top:232px;width:4px;height:1px;background:#000;"></div>
<div style="left:1257px;top:277px;width:4px;height:1px;background:#000;"></div>
<div style="left:1257px;top:322px;width:4px;height:1px;background:#000;"></div>
<div style="left:1257px;top:366px;width:4px;height:1px;background:#000;"></div>
<div style="left:1257px;top:411px;width:4px;height:1px;background:#000;"></div>
<div style="left:1257px;top:455px;width:4px;height:1px;background:#000;"></div>
<div style="left:1257px;top:500px;width:4px;height:1px;background:#000;"></div>
<div style="left:1257px;top:544px;width:4px;height:1px;background:#000;"></div>
<div style="left:1257px;top:589px;width:4px;height:1px;background:#000;"></div>
<div style="left:1257px;top:633px;width:4px;height:1px;background:#000;"></div>
<div style="left:1257px;top:678px;width:4px;height:1px;background:#000;"></div>
<div style="left:1257px;top:722px;width:4px;height:1px;background:#000;"></div>
<span style="left:1080.5px;width:600px;text-align:center;top:76px;line-height:21px;font-size:15.1px;color:#000;text-decoration:underline;text-underline-offset:1.5px;transform:rotate(.03deg);">Overlays</span>
<div style="left:1357px;top:100px;width:76px;height:19px;background:#f0f0f0;box-shadow:inset 1px 1px 0 #fff,inset -1px -1px 0 #6a6a6a,inset -2px -2px 0 #a0a0a0;"></div>
<span style="left:1095.0px;width:600px;text-align:center;top:98px;line-height:21px;font-size:15.1px;color:#000;transform:rotate(.03deg);">Options...</span>
<span style="left:1324.5px;top:110px;width:0;height:0;"><span style="left:-30px;top:-10px;width:60px;line-height:20px;text-align:center;font-size:15px;transform:rotate(-90deg);transform-origin:30px 10px;">Set</span></span>
<span style="left:1347px;top:111.5px;width:0;height:0;"><span style="left:-30px;top:-10px;width:60px;line-height:20px;text-align:center;font-size:15px;transform:rotate(-90deg);transform-origin:30px 10px;">On</span></span>
<div style="left:1311px;top:126px;width:25px;height:16px;background:#f0f0f0;box-shadow:inset 1px 1px 0 #fff,inset -1px -1px 0 #6a6a6a,inset -2px -2px 0 #a0a0a0;"></div>
<span style="left:1023.5px;width:600px;text-align:center;top:123px;line-height:21px;font-size:15.3px;color:#000;transform:rotate(.03deg);">1</span>
<div style="left:1339px;top:127px;width:16px;height:15px;background:#fff;box-shadow:inset 1px 1px 0 #8a8a8a,inset 2px 2px 0 #6c6c6c,inset -1px -1px 0 #fff,inset -2px -2px 0 #ececec;"></div>
<span style="left:1359px;transform-origin:0 100%;top:124px;line-height:21px;font-size:15.3px;color:#008000;letter-spacing:-.18px;transform:rotate(.03deg);">Overlay 1</span>
<div style="left:1311px;top:146px;width:25px;height:16px;background:#f0f0f0;box-shadow:inset 1px 1px 0 #fff,inset -1px -1px 0 #6a6a6a,inset -2px -2px 0 #a0a0a0;"></div>
<span style="left:1023.5px;width:600px;text-align:center;top:143px;line-height:21px;font-size:15.3px;color:#000;transform:rotate(.03deg);">2</span>
<div style="left:1339px;top:147px;width:16px;height:15px;background:#fff;box-shadow:inset 1px 1px 0 #8a8a8a,inset 2px 2px 0 #6c6c6c,inset -1px -1px 0 #fff,inset -2px -2px 0 #ececec;"></div>
<span style="left:1359px;transform-origin:0 100%;top:144px;line-height:21px;font-size:15.3px;color:#00a8a8;letter-spacing:-.18px;transform:rotate(.03deg);">Overlay 2</span>
<div style="left:1311px;top:166px;width:25px;height:16px;background:#f0f0f0;box-shadow:inset 1px 1px 0 #fff,inset -1px -1px 0 #6a6a6a,inset -2px -2px 0 #a0a0a0;"></div>
<span style="left:1023.5px;width:600px;text-align:center;top:163px;line-height:21px;font-size:15.3px;color:#000;transform:rotate(.03deg);">3</span>
<div style="left:1339px;top:167px;width:16px;height:15px;background:#fff;box-shadow:inset 1px 1px 0 #8a8a8a,inset 2px 2px 0 #6c6c6c,inset -1px -1px 0 #fff,inset -2px -2px 0 #ececec;"></div>
<span style="left:1359px;transform-origin:0 100%;top:164px;line-height:21px;font-size:15.3px;color:#800080;letter-spacing:-.18px;transform:rotate(.03deg);">Overlay 3</span>
<div style="left:1311px;top:186px;width:25px;height:16px;background:#f0f0f0;box-shadow:inset 1px 1px 0 #fff,inset -1px -1px 0 #6a6a6a,inset -2px -2px 0 #a0a0a0;"></div>
<span style="left:1023.5px;width:600px;text-align:center;top:183px;line-height:21px;font-size:15.3px;color:#000;transform:rotate(.03deg);">4</span>
<div style="left:1339px;top:187px;width:16px;height:15px;background:#fff;box-shadow:inset 1px 1px 0 #8a8a8a,inset 2px 2px 0 #6c6c6c,inset -1px -1px 0 #fff,inset -2px -2px 0 #ececec;"></div>
<span style="left:1359px;transform-origin:0 100%;top:184px;line-height:21px;font-size:15.3px;color:#ff00ff;letter-spacing:-.18px;transform:rotate(.03deg);">Overlay 4</span>
<div style="left:1311px;top:206px;width:25px;height:16px;background:#f0f0f0;box-shadow:inset 1px 1px 0 #fff,inset -1px -1px 0 #6a6a6a,inset -2px -2px 0 #a0a0a0;"></div>
<span style="left:1023.5px;width:600px;text-align:center;top:203px;line-height:21px;font-size:15.3px;color:#000;transform:rotate(.03deg);">5</span>
<div style="left:1339px;top:207px;width:16px;height:15px;background:#fff;box-shadow:inset 1px 1px 0 #8a8a8a,inset 2px 2px 0 #6c6c6c,inset -1px -1px 0 #fff,inset -2px -2px 0 #ececec;"></div>
<span style="left:1359px;transform-origin:0 100%;top:204px;line-height:21px;font-size:15.3px;color:#804020;letter-spacing:-.18px;transform:rotate(.03deg);">Overlay 5</span>
<div style="left:1311px;top:226px;width:25px;height:16px;background:#f0f0f0;box-shadow:inset 1px 1px 0 #fff,inset -1px -1px 0 #6a6a6a,inset -2px -2px 0 #a0a0a0;"></div>
<span style="left:1023.5px;width:600px;text-align:center;top:223px;line-height:21px;font-size:15.3px;color:#000;transform:rotate(.03deg);">6</span>
<div style="left:1339px;top:227px;width:16px;height:15px;background:#fff;box-shadow:inset 1px 1px 0 #8a8a8a,inset 2px 2px 0 #6c6c6c,inset -1px -1px 0 #fff,inset -2px -2px 0 #ececec;"></div>
<span style="left:1359px;transform-origin:0 100%;top:224px;line-height:21px;font-size:15.3px;color:#ff8050;letter-spacing:-.18px;transform:rotate(.03deg);">Overlay 6</span>
<div style="left:1311px;top:246px;width:25px;height:16px;background:#f0f0f0;box-shadow:inset 1px 1px 0 #fff,inset -1px -1px 0 #6a6a6a,inset -2px -2px 0 #a0a0a0;"></div>
<span style="left:1023.5px;width:600px;text-align:center;top:243px;line-height:21px;font-size:15.3px;color:#000;transform:rotate(.03deg);">7</span>
<div style="left:1339px;top:247px;width:16px;height:15px;background:#fff;box-shadow:inset 1px 1px 0 #8a8a8a,inset 2px 2px 0 #6c6c6c,inset -1px -1px 0 #fff,inset -2px -2px 0 #ececec;"></div>
<span style="left:1359px;transform-origin:0 100%;top:244px;line-height:21px;font-size:15.3px;color:#30f030;letter-spacing:-.18px;transform:rotate(.03deg);">Overlay 7</span>
<div style="left:1311px;top:266px;width:25px;height:16px;background:#f0f0f0;box-shadow:inset 1px 1px 0 #fff,inset -1px -1px 0 #6a6a6a,inset -2px -2px 0 #a0a0a0;"></div>
<span style="left:1023.5px;width:600px;text-align:center;top:263px;line-height:21px;font-size:15.3px;color:#000;transform:rotate(.03deg);">8</span>
<div style="left:1339px;top:267px;width:16px;height:15px;background:#fff;box-shadow:inset 1px 1px 0 #8a8a8a,inset 2px 2px 0 #6c6c6c,inset -1px -1px 0 #fff,inset -2px -2px 0 #ececec;"></div>
<span style="left:1359px;transform-origin:0 100%;top:264px;line-height:21px;font-size:15.3px;color:#80dcdc;letter-spacing:-.18px;transform:rotate(.03deg);">Overlay 8</span>
<div style="left:1311px;top:286px;width:25px;height:16px;background:#f0f0f0;box-shadow:inset 1px 1px 0 #fff,inset -1px -1px 0 #6a6a6a,inset -2px -2px 0 #a0a0a0;"></div>
<span style="left:1023.5px;width:600px;text-align:center;top:283px;line-height:21px;font-size:15.3px;color:#000;transform:rotate(.03deg);">9</span>
<div style="left:1339px;top:287px;width:16px;height:15px;background:#fff;box-shadow:inset 1px 1px 0 #8a8a8a,inset 2px 2px 0 #6c6c6c,inset -1px -1px 0 #fff,inset -2px -2px 0 #ececec;"></div>
<span style="left:1359px;transform-origin:0 100%;top:284px;line-height:21px;font-size:15.3px;color:#c8c830;letter-spacing:-.18px;transform:rotate(.03deg);">Overlay 9</span>
<div style="left:1311px;top:306px;width:25px;height:16px;background:#f0f0f0;box-shadow:inset 1px 1px 0 #fff,inset -1px -1px 0 #6a6a6a,inset -2px -2px 0 #a0a0a0;"></div>
<span style="left:1023.5px;width:600px;text-align:center;top:303px;line-height:21px;font-size:15.3px;color:#000;transform:rotate(.03deg);">10</span>
<div style="left:1339px;top:307px;width:16px;height:15px;background:#fff;box-shadow:inset 1px 1px 0 #8a8a8a,inset 2px 2px 0 #6c6c6c,inset -1px -1px 0 #fff,inset -2px -2px 0 #ececec;"></div>
<span style="left:1359px;transform-origin:0 100%;top:304px;line-height:21px;font-size:15.3px;color:#ff90ff;letter-spacing:-.18px;transform:rotate(.03deg);">Overlay 10</span>
<div style="left:1311px;top:326px;width:25px;height:16px;background:#f0f0f0;box-shadow:inset 1px 1px 0 #fff,inset -1px -1px 0 #6a6a6a,inset -2px -2px 0 #a0a0a0;"></div>
<span style="left:1023.5px;width:600px;text-align:center;top:323px;line-height:21px;font-size:15.3px;color:#000;transform:rotate(.03deg);">11</span>
<div style="left:1339px;top:327px;width:16px;height:15px;background:#fff;box-shadow:inset 1px 1px 0 #8a8a8a,inset 2px 2px 0 #6c6c6c,inset -1px -1px 0 #fff,inset -2px -2px 0 #ececec;"></div>
<span style="left:1359px;transform-origin:0 100%;top:324px;line-height:21px;font-size:15.3px;color:#808000;letter-spacing:-.18px;transform:rotate(.03deg);">Overlay 11</span>
<div style="left:1311px;top:346px;width:25px;height:16px;background:#f0f0f0;box-shadow:inset 1px 1px 0 #fff,inset -1px -1px 0 #6a6a6a,inset -2px -2px 0 #a0a0a0;"></div>
<span style="left:1023.5px;width:600px;text-align:center;top:343px;line-height:21px;font-size:15.3px;color:#000;transform:rotate(.03deg);">12</span>
<div style="left:1339px;top:347px;width:16px;height:15px;background:#fff;box-shadow:inset 1px 1px 0 #8a8a8a,inset 2px 2px 0 #6c6c6c,inset -1px -1px 0 #fff,inset -2px -2px 0 #ececec;"></div>
<span style="left:1359px;transform-origin:0 100%;top:344px;line-height:21px;font-size:15.3px;color:#ffb060;letter-spacing:-.18px;transform:rotate(.03deg);">Overlay 12</span>
<div style="left:1311px;top:366px;width:25px;height:16px;background:#f0f0f0;box-shadow:inset 1px 1px 0 #fff,inset -1px -1px 0 #6a6a6a,inset -2px -2px 0 #a0a0a0;"></div>
<span style="left:1023.5px;width:600px;text-align:center;top:363px;line-height:21px;font-size:15.3px;color:#000;transform:rotate(.03deg);">C1</span>
<div style="left:1339px;top:367px;width:16px;height:15px;background:#fff;box-shadow:inset 1px 1px 0 #8a8a8a,inset 2px 2px 0 #6c6c6c,inset -1px -1px 0 #fff,inset -2px -2px 0 #ececec;"></div>
<span style="left:1359px;transform-origin:0 100%;top:364px;line-height:21px;font-size:15.3px;color:#000;letter-spacing:.32px;transform:rotate(.03deg);">Composite 1</span>
<div style="left:1311px;top:387px;width:25px;height:16px;background:#f0f0f0;box-shadow:inset 1px 1px 0 #fff,inset -1px -1px 0 #6a6a6a,inset -2px -2px 0 #a0a0a0;"></div>
<span style="left:1023.5px;width:600px;text-align:center;top:384px;line-height:21px;font-size:15.3px;color:#000;transform:rotate(.03deg);">C2</span>
<div style="left:1339px;top:388px;width:16px;height:15px;background:#fff;box-shadow:inset 1px 1px 0 #8a8a8a,inset 2px 2px 0 #6c6c6c,inset -1px -1px 0 #fff,inset -2px -2px 0 #ececec;"></div>
<span style="left:1359px;transform-origin:0 100%;top:385px;line-height:21px;font-size:15.3px;color:#808080;letter-spacing:.32px;transform:rotate(.03deg);">Composite 2</span>
<div style="left:163px;top:158px;width:270px;height:38px;background:#fff;"></div>
<span style="left:173px;transform-origin:0 100%;top:166px;line-height:21px;font-size:15.2px;color:#a0a0a0;letter-spacing:0.05px;transform:rotate(.03deg);">Signal Generator</span>
<div style="left:407px;top:167px;width:25px;height:25px;background:#e4e4e4;"></div>
<span style="left:119.5px;width:600px;text-align:center;top:170px;line-height:19px;font-size:13px;color:#fafafa;transform:rotate(.03deg);">×</span>
<div style="left:163px;top:196px;width:270px;height:121px;background:#f0f0f0;"></div>
<div style="left:243px;top:196px;width:190px;height:1px;background:#dcdcdc;"></div>
<div style="left:168px;top:201px;width:133px;height:32px;background:#f0f0f0;box-shadow:inset 1px 1px 0 #fff,inset -1px -1px 0 #6a6a6a,inset -2px -2px 0 #a0a0a0;"></div>
<span style="left:-66.69999999999999px;width:600px;text-align:center;top:205px;line-height:21px;font-size:15.3px;color:#000;transform:rotate(.03deg);">Run</span>
<div style="left:308px;top:201px;width:113px;height:32px;background:#f0f0f0;box-shadow:inset 1px 1px 0 #fff,inset -1px -1px 0 #6a6a6a,inset -2px -2px 0 #a0a0a0;"></div>
<span style="left:63.5px;width:600px;text-align:center;top:205px;line-height:21px;font-size:15.3px;color:#000;transform:rotate(.03deg);">Level</span>
<div style="left:188px;top:241px;width:112px;height:28px;background:#fff;box-shadow:inset 1px 1px 0 #8a8a8a,inset 2px 2px 0 #6c6c6c,inset -1px -1px 0 #fff,inset -2px -2px 0 #ececec;"></div>
<span style="left:193px;transform-origin:0 100%;top:245px;line-height:21px;font-size:15.3px;color:#000;transform:rotate(.03deg);">IMD Test To</span>
<div style="left:273px;top:244px;width:4px;height:22px;background:linear-gradient(90deg,rgba(255,255,255,0),#fff);"></div>
<div style="left:277px;top:243px;width:21px;height:24px;background:#f0f0f0;box-shadow:inset 1px 1px 0 #fff,inset -1px -1px 0 #6a6a6a,inset -2px -2px 0 #a0a0a0;"></div>
<svg style="left:277px;top:243px" width="21" height="24" viewBox="277 243 21 24" ><path d="M282.7 253.4 L291.9 253.4 L287.3 258.4 Z" fill="#000"/></svg>
<div style="left:308px;top:241px;width:113px;height:29px;background:#f0f0f0;box-shadow:inset 1px 1px 0 #fff,inset -1px -1px 0 #6a6a6a,inset -2px -2px 0 #a0a0a0;"></div>
<span style="left:63.69999999999999px;width:600px;text-align:center;top:244px;line-height:21px;font-size:15.3px;color:#000;transform:rotate(.03deg);">Details...</span>
<div style="left:188px;top:276px;width:112px;height:28px;background:#fff;box-shadow:inset 1px 1px 0 #8a8a8a,inset 2px 2px 0 #6c6c6c,inset -1px -1px 0 #fff,inset -2px -2px 0 #ececec;"></div>
<span style="left:193px;transform-origin:0 100%;top:280px;line-height:21px;font-size:15.3px;color:#000;transform:rotate(.03deg);">N/A</span>
<div style="left:277px;top:278px;width:21px;height:24px;background:#f0f0f0;box-shadow:inset 1px 1px 0 #fff,inset -1px -1px 0 #6a6a6a,inset -2px -2px 0 #a0a0a0;"></div>
<svg style="left:277px;top:278px" width="21" height="24" viewBox="277 278 21 24" ><path d="M282.7 288.4 L291.9 288.4 L287.3 293.4 Z" fill="#000"/></svg>
<div style="left:308px;top:276px;width:113px;height:29px;background:#f0f0f0;box-shadow:inset 1px 1px 0 #fff,inset -1px -1px 0 #6a6a6a,inset -2px -2px 0 #a0a0a0;"></div>
<span style="left:63.69999999999999px;width:600px;text-align:center;top:279px;line-height:21px;font-size:15.3px;color:#a8a8a8;transform:rotate(.03deg);">Details...</span>
<div style="left:155px;top:335px;width:278px;height:38px;background:#fff;"></div>
<span style="left:165px;transform-origin:0 100%;top:343px;line-height:21px;font-size:15.2px;color:#a0a0a0;letter-spacing:0.33px;transform:rotate(.03deg);">Amplitude</span>
<div style="left:407px;top:344px;width:25px;height:25px;background:#e4e4e4;"></div>
<span style="left:119.5px;width:600px;text-align:center;top:347px;line-height:19px;font-size:13px;color:#fafafa;transform:rotate(.03deg);">×</span>
<div style="left:155px;top:373px;width:278px;height:41px;background:#000;"></div>
<div style="left:156px;top:374px;width:138px;height:40px;background:#fff;"></div>
<div style="left:295px;top:374px;width:138px;height:40px;background:#fff;"></div>
<span style="left:158px;transform-origin:0 100%;top:378px;line-height:39px;font-size:31px;color:#000;letter-spacing:.2px;transform:rotate(.03deg);">-27.40</span>
<span style="left:297px;transform-origin:0 100%;top:378px;line-height:39px;font-size:31px;color:#000;letter-spacing:.2px;transform:rotate(.03deg);">dBFS</span>
<div style="left:192px;top:436px;width:205px;height:38px;background:#fff;"></div>
<span style="left:202.5px;transform-origin:0 100%;top:444px;line-height:21px;font-size:15.2px;color:#a0a0a0;letter-spacing:0.3px;transform:rotate(.03deg);">IMD</span>
<div style="left:371px;top:445px;width:25px;height:25px;background:#e4e4e4;"></div>
<span style="left:83.5px;width:600px;text-align:center;top:448px;line-height:19px;font-size:13px;color:#fafafa;transform:rotate(.03deg);">×</span>
<div style="left:192px;top:474px;width:205px;height:41px;background:#000;"></div>
<div style="left:193px;top:475px;width:204px;height:40px;background:#fff;"></div>
<span style="left:195.5px;transform-origin:0 100%;top:478px;line-height:39px;font-size:31px;color:#000;letter-spacing:.12px;transform:rotate(.03deg);">0.000963 %</span></div></body></html>
